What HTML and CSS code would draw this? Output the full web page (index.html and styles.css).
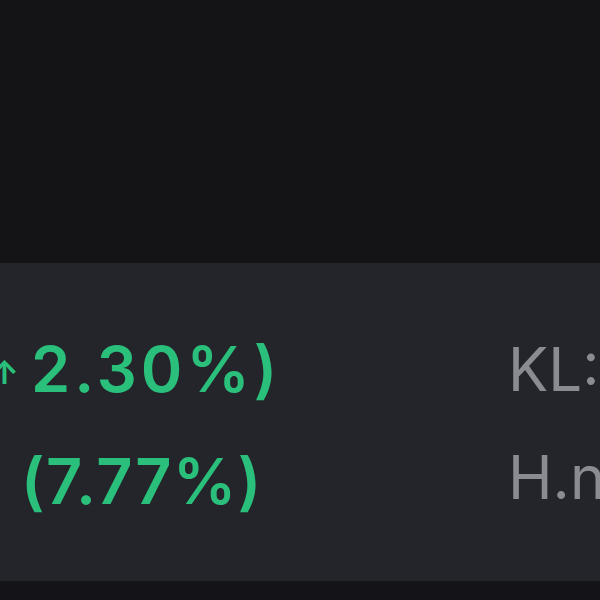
FILE: index.html
```html
<!DOCTYPE html>
<html lang="en">
<head>
    <meta charset="UTF-8">
    <title>Quote</title>
    <link rel="stylesheet" href="styles.css">
</head>
<body>
    <div class="chart-area"></div>
    <div class="quote-panel">
        <div class="change-col">
            <div class="change-row wide"><span class="arrow">↑</span>2.30%)</div>
            <div class="change-row">(7.77%)</div>
        </div>
        <div class="info-col">
            <div class="info-row">KL: 1,234,500</div>
            <div class="info-row">H.n: 45.60</div>
        </div>
    </div>
    <div class="bottom-bar"></div>
</body>
</html>
```

FILE: styles.css
```css
body {
    margin: 0;
    background-color: #141417;
    font-family: Inter, "Noto Sans", sans-serif;
    overflow: hidden;
}

.chart-area {
    height: 263px;
    background-color: #141417;
}

.quote-panel {
    height: 318px;
    background-color: #23252a;
    display: flex;
    overflow: hidden;
}

.change-col {
    width: 508px;
    flex-shrink: 0;
    padding-top: 74px;
    display: flex;
    flex-direction: column;
    gap: 44px;
}

.change-row {
    color: #2ac07c;
    font-size: 63px;
    font-weight: 600;
    line-height: 64px;
    letter-spacing: 1.5px;
    white-space: nowrap;
    margin-left: 21px;
}

.change-row.wide {
    letter-spacing: 4px;
}

.arrow {
    font-size: 32px;
    font-weight: 700;
    letter-spacing: 0;
    margin-left: -31px;
    margin-right: 12px;
    vertical-align: 8px;
}

.info-col {
    padding-top: 74px;
    display: flex;
    flex-direction: column;
    gap: 44px;
}

.info-row {
    color: #8a8c92;
    font-size: 60px;
    line-height: 64px;
    white-space: nowrap;
}

.bottom-bar {
    height: 19px;
    background-color: #131318;
}
```
